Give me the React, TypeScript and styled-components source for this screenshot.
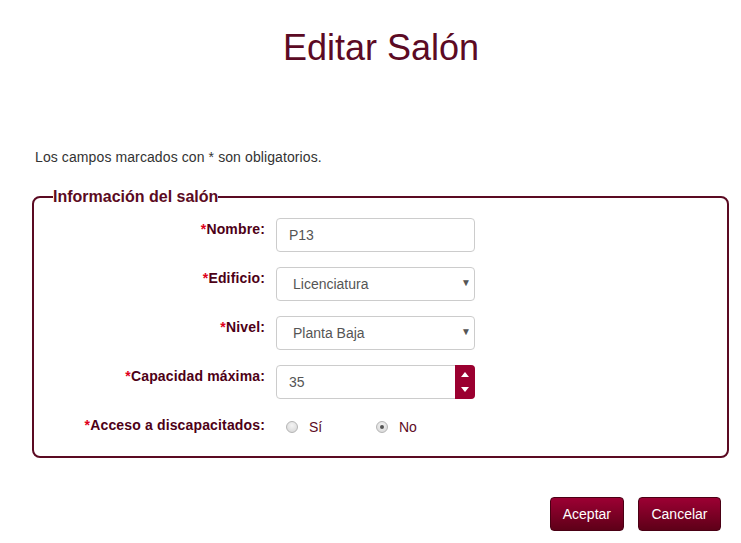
import * as React from "react";
import styled, { createGlobalStyle } from "styled-components";

const GlobalStyle = createGlobalStyle`
  body {
    margin: 0;
    background: #ffffff;
    font-family: "Liberation Sans", Arial, sans-serif;
  }
`;

const Page = styled.div`
  width: 741px;
  min-height: 543px;
  box-sizing: border-box;
  padding: 0 12px 0 32px;
`;

const Title = styled.h1`
  margin: 0 -12px 0 -32px;
  padding: 27px 0 0 21px;
  text-align: center;
  font-size: 36px;
  font-weight: normal;
  line-height: 41px;
  color: #5c0a24;
`;

const Notice = styled.p`
  margin: 81px 0 0 3px;
  font-size: 14px;
  line-height: 16px;
  letter-spacing: 0.1px;
  color: #333333;
`;

const Fieldset = styled.fieldset`
  margin: 23px 0 0 0;
  padding: 12px 19px 19px 19px;
  width: 697px;
  box-sizing: border-box;
  border: 2px solid #5b0a22;
  border-radius: 8px;
`;

const Legend = styled.legend`
  padding: 0;
  font-size: 16px;
  font-weight: bold;
  line-height: 18px;
  color: #5b0a22;
`;

const Form = styled.div`
  display: grid;
  grid-template-columns: 212px 199px;
  column-gap: 11px;
  row-gap: 15px;
`;

const Label = styled.label`
  justify-self: end;
  padding-top: 2px;
  font-size: 14px;
  font-weight: bold;
  line-height: 18px;
  letter-spacing: 0.15px;
  color: #4d0016;
`;

const Star = styled.span`
  color: #e0001b;
`;

const Field = styled.div<{ $indent?: number }>`
  position: relative;
  height: 34px;
  box-sizing: border-box;
  border: 1px solid #cccccc;
  border-radius: 4px;
  background: #ffffff;
  display: flex;
  align-items: center;
  padding-left: ${(p) => p.$indent ?? 12}px;
  font-size: 14px;
  color: #555555;
`;

const Caret = styled.span`
  position: absolute;
  right: 3px;
  top: 9px;
  font-size: 10px;
  color: #555555;
`;

const Spinner = styled.div`
  position: absolute;
  top: -1px;
  right: -1px;
  bottom: -1px;
  width: 20px;
  background: #9b0030;
  border-radius: 0 4px 4px 0;
  display: flex;
  flex-direction: column;
  align-items: center;
  justify-content: space-between;
  padding: 7px 0 7px;
  box-sizing: border-box;
`;

const Radios = styled.div`
  display: flex;
  align-items: center;
  padding: 3px 0 0 10px;
  height: 20px;
`;

const RadioOption = styled.label`
  display: flex;
  align-items: center;
  width: 90px;
  font-size: 14px;
  color: #5c0a24;
`;

const RadioDot = styled.span<{ $checked?: boolean }>`
  width: 12px;
  height: 12px;
  box-sizing: border-box;
  border-radius: 50%;
  border: 1px solid #b5b5b5;
  background: radial-gradient(circle at 50% 35%, #f4f4f4, #d4d4d4);
  margin-right: 11px;
  display: flex;
  align-items: center;
  justify-content: center;
  &::after {
    content: "";
    display: ${(p) => (p.$checked ? "block" : "none")};
    width: 4px;
    height: 4px;
    border-radius: 50%;
    background: #555555;
  }
`;

const Actions = styled.div`
  display: flex;
  justify-content: flex-end;
  gap: 14px;
  margin-top: 39px;
  padding-right: 8px;
`;

const Button = styled.button<{ $pad?: number }>`
  height: 34px;
  padding: 0 ${(p) => p.$pad ?? 12}px;
  border: 1px solid #4a0014;
  border-radius: 4px;
  background: linear-gradient(to bottom, #9c0033, #5e0018);
  color: #ffffff;
  font-family: "Liberation Sans", Arial, sans-serif;
  font-size: 14px;
`;

const Triangle = ({ up }: { up?: boolean }) => (
  <svg width="8" height="5" viewBox="0 0 8 5">
    <path d={up ? "M0 5 L4 0 L8 5 Z" : "M0 0 L4 5 L8 0 Z"} fill="#ffffff" />
  </svg>
);

export default function App() {
  return (
    <Page>
      <GlobalStyle />
      <Title>Editar Salón</Title>
      <Notice>Los campos marcados con * son obligatorios.</Notice>
      <Fieldset>
        <Legend>Información del salón</Legend>
        <Form>
          <Label>
            <Star>*</Star>Nombre:
          </Label>
          <Field>P13</Field>

          <Label>
            <Star>*</Star>Edificio:
          </Label>
          <Field $indent={16}>
            Licenciatura
            <Caret>▼</Caret>
          </Field>

          <Label>
            <Star>*</Star>Nivel:
          </Label>
          <Field $indent={16}>
            Planta Baja
            <Caret>▼</Caret>
          </Field>

          <Label>
            <Star>*</Star>Capacidad máxima:
          </Label>
          <Field>
            35
            <Spinner>
              <Triangle up />
              <Triangle />
            </Spinner>
          </Field>

          <Label>
            <Star>*</Star>Acceso a discapacitados:
          </Label>
          <Radios>
            <RadioOption>
              <RadioDot />
              Sí
            </RadioOption>
            <RadioOption>
              <RadioDot $checked />
              No
            </RadioOption>
          </Radios>
        </Form>
      </Fieldset>
      <Actions>
        <Button>Aceptar</Button>
        <Button $pad={12.5}>Cancelar</Button>
      </Actions>
    </Page>
  );
}
